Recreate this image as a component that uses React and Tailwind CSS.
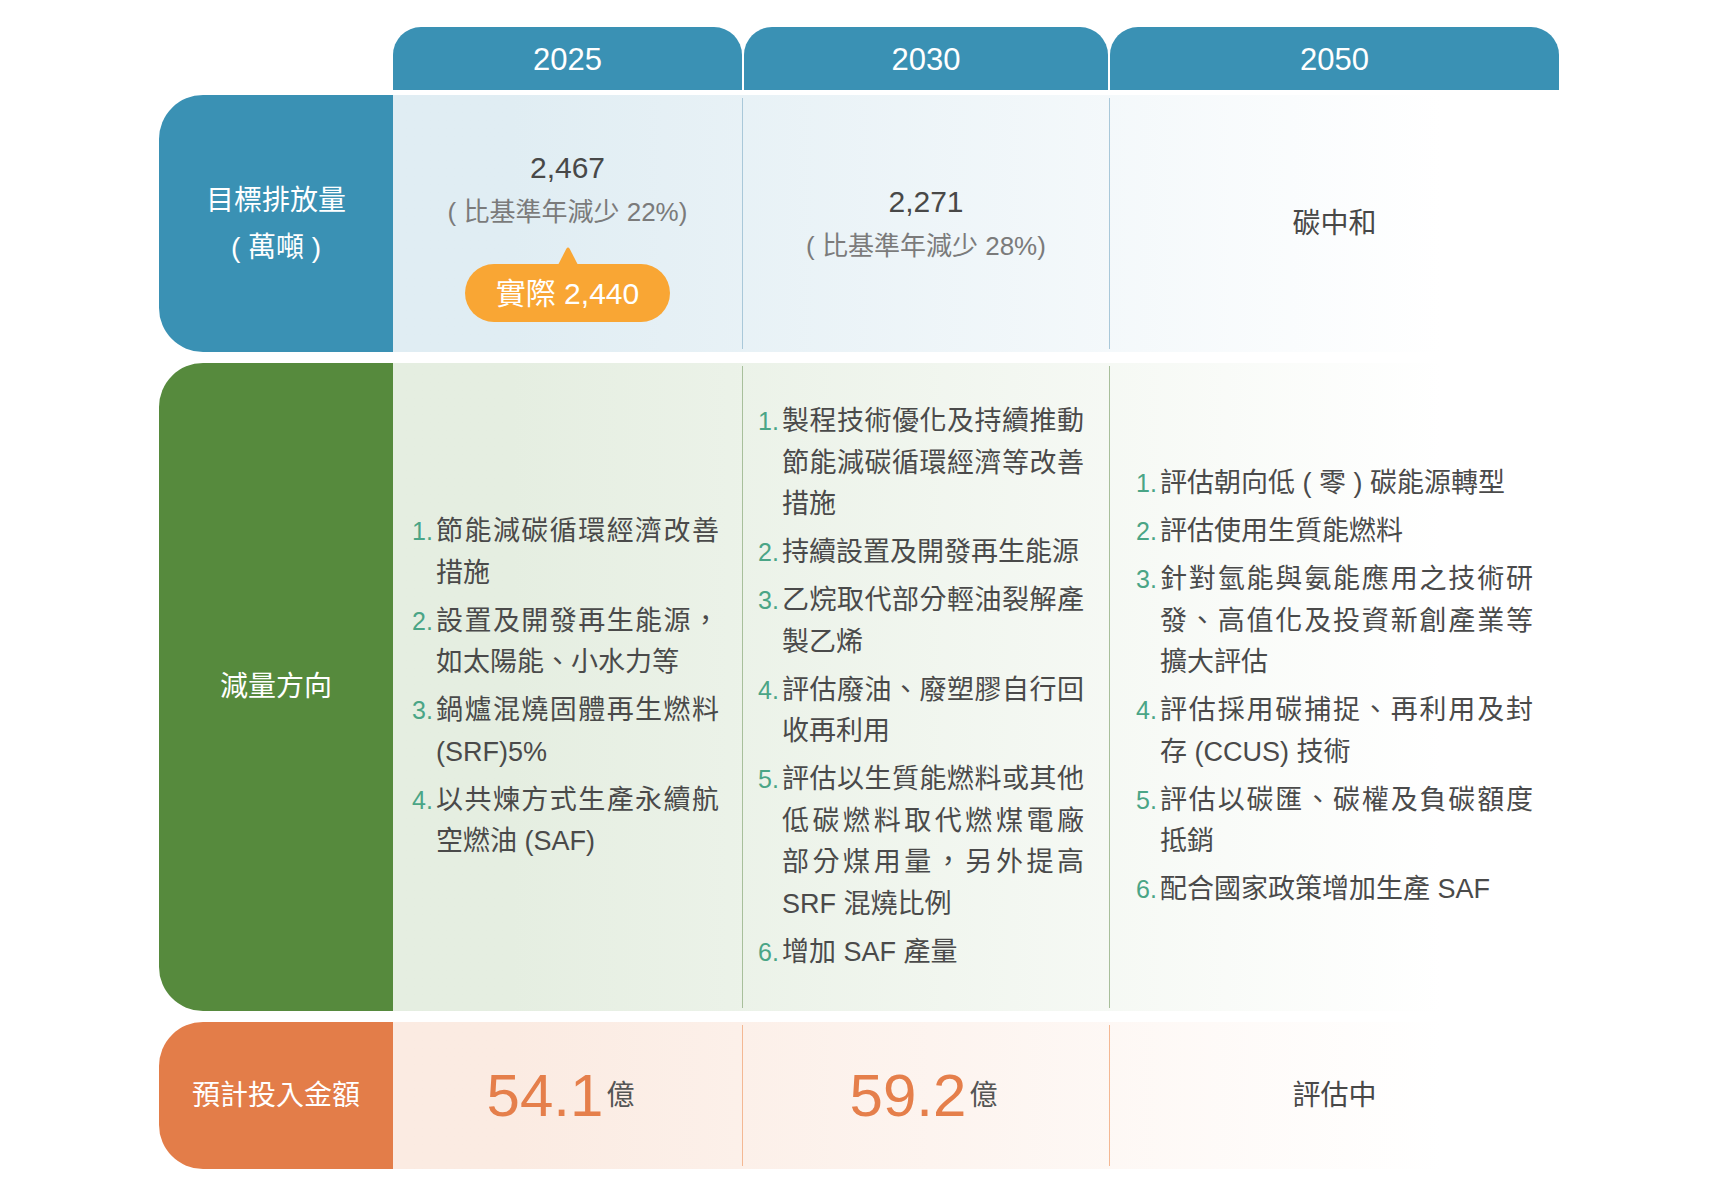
import React from 'react';

const years = ['2025', '2030', '2050'];

// 減量方向 lists, one per year column
const plans = [
  {
    pad: 'pl-[19px] pr-[23px]',
    items: [
      '節能減碳循環經濟改善措施',
      '設置及開發再生能源，如太陽能、小水力等',
      '鍋爐混燒固體再生燃料(SRF)5%',
      '以共煉方式生產永續航空燃油 (SAF)',
    ],
  },
  {
    pad: 'pl-[15px] pr-[25px]',
    items: [
      '製程技術優化及持續推動節能減碳循環經濟等改善措施',
      '持續設置及開發再生能源',
      '乙烷取代部分輕油裂解產製乙烯',
      '評估廢油、廢塑膠自行回收再利用',
      ['評估以生質能燃料或其他', '低碳燃料取代燃煤電廠', '部分煤用量，另外提高', 'SRF 混燒比例'],
      '增加 SAF 產量',
    ],
  },
  {
    pad: 'pl-[26px] pr-[26px]',
    items: [
      '評估朝向低 ( 零 ) 碳能源轉型',
      '評估使用生質能燃料',
      '針對氫能與氨能應用之技術研發、高值化及投資新創產業等擴大評估',
      '評估採用碳捕捉、再利用及封存 (CCUS) 技術',
      '評估以碳匯、碳權及負碳額度抵銷',
      '配合國家政策增加生產 SAF',
    ],
  },
];

const PlanText = ({ text }) => {
  if (Array.isArray(text)) {
    return (
      <span className="flex-1">
        {text.map((line, i) => (
          <span
            key={i}
            className={i < text.length - 1 ? 'block text-justify [text-align-last:justify]' : 'block'}
          >
            {line}
          </span>
        ))}
      </span>
    );
  }
  return <span className="flex-1 text-justify">{text}</span>;
};

const App = () => {
  return (
    <div className="min-h-[1178px] bg-white pl-[159px] pt-[27px] font-['Liberation_Sans','Noto_Sans_CJK_TC',sans-serif]">
      <div className="w-[1400px]">
        {/* Year tabs */}
        <div className="grid grid-cols-[234px_349px_367px_450px]">
          <div />
          {years.map((year, i) => (
            <div
              key={year}
              className={`flex h-[63px] items-center justify-center rounded-t-[28px] bg-[#3a91b4] pt-[4px] text-[31px] text-white ${
                i === 1 ? 'ml-[2px] mr-[1px]' : i === 2 ? 'ml-[1px]' : ''
              }`}
            >
              {year}
            </div>
          ))}
        </div>

        {/* 目標排放量 */}
        <div className="mt-[5px] flex h-[257px]">
          <div className="flex w-[234px] shrink-0 flex-col items-center justify-center rounded-l-[44px] bg-[#3a91b4] text-[28px] leading-[47px] text-white">
            <span>目標排放量</span>
            <span>( 萬噸 )</span>
          </div>
          <div className="grid flex-1 grid-cols-[349px_367px_450px] bg-linear-to-r from-[#e0edf3] from-10% to-white to-90% py-[3px]">
            <div className="flex flex-col items-center pt-[47px]">
              <p className="text-[30px] leading-[45px] text-[#484848]">2,467</p>
              <p className="text-[26px] leading-[45px] text-[#7b7b7b]">( 比基準年減少 22%)</p>
              <div className="relative mt-[29px] flex h-[58px] w-[205px] items-center justify-center rounded-full bg-[#f9a634] text-[30px] text-white">
                <svg
                  className="absolute -top-[17px] left-1/2 -translate-x-1/2"
                  width="20"
                  height="18"
                  viewBox="0 0 20 18"
                >
                  <path d="M0 18 L8.2 2 Q10 -0.8 11.8 2 L20 18 Z" fill="#f9a634" />
                </svg>
                實際 2,440
              </div>
            </div>
            <div className="flex flex-col items-center justify-center border-l border-[#a9c8d9]">
              <p className="text-[30px] leading-[45px] text-[#484848]">2,271</p>
              <p className="text-[26px] leading-[45px] text-[#7b7b7b]">( 比基準年減少 28%)</p>
            </div>
            <div className="flex items-center justify-center border-l border-[#a9c8d9] text-[28px] text-[#484848]">
              碳中和
            </div>
          </div>
        </div>

        {/* 減量方向 */}
        <div className="mt-[11px] flex h-[648px]">
          <div className="flex w-[234px] shrink-0 items-center justify-center rounded-l-[44px] bg-[#568a3d] text-[28px] text-white">
            減量方向
          </div>
          <div className="grid flex-1 grid-cols-[349px_367px_450px] bg-linear-to-r from-[#e5eee1] from-10% to-white to-90% py-[3px]">
            {plans.map((plan, col) => (
              <div
                key={col}
                className={`flex flex-col justify-center gap-[6.5px] text-[27px] leading-[41.5px] text-[#4a4a4a] ${plan.pad} ${
                  col > 0 ? 'border-l border-[#a8bf9b]' : ''
                }`}
              >
                {plan.items.map((item, i) => (
                  <div key={i} className="flex items-baseline">
                    <span className="w-[24px] shrink-0 text-[25px] text-[#4aa586]">{i + 1}.</span>
                    <PlanText text={item} />
                  </div>
                ))}
              </div>
            ))}
          </div>
        </div>

        {/* 預計投入金額 */}
        <div className="mt-[11px] flex h-[147px]">
          <div className="flex w-[234px] shrink-0 items-center justify-center rounded-l-[44px] bg-[#e37d49] text-[28px] text-white">
            預計投入金額
          </div>
          <div className="grid flex-1 grid-cols-[349px_367px_450px] bg-linear-to-r from-[#fbebe2] from-10% to-white to-90% py-[3px]">
            <div className="flex items-center justify-center pr-[14px]">
              <span className="text-[60px] leading-none text-[#e57f4b]">54.1</span>
              <span className="ml-[3px] text-[28px] text-[#555555]">億</span>
            </div>
            <div className="flex items-center justify-center border-l border-[#f4b893] pr-[5px]">
              <span className="text-[60px] leading-none text-[#e57f4b]">59.2</span>
              <span className="ml-[3px] text-[28px] text-[#555555]">億</span>
            </div>
            <div className="flex items-center justify-center border-l border-[#f4b893] text-[28px] text-[#484848]">
              評估中
            </div>
          </div>
        </div>
      </div>
    </div>
  );
};

export default App;
